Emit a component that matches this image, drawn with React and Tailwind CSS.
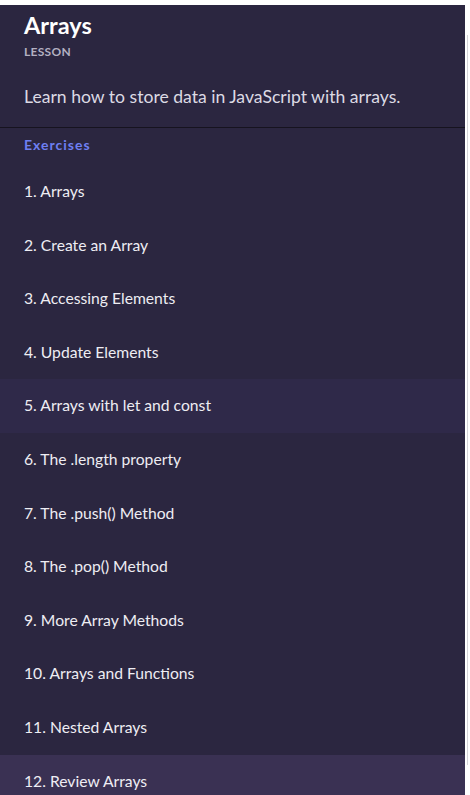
const exercises = [
  "1. Arrays",
  "2. Create an Array",
  "3. Accessing Elements",
  "4. Update Elements",
  "5. Arrays with let and const",
  "6. The .length property",
  "7. The .push() Method",
  "8. The .pop() Method",
  "9. More Array Methods",
  "10. Arrays and Functions",
  "11. Nested Arrays",
  "12. Review Arrays",
];

export default function App() {
  return (
    <div className="h-[795px] overflow-hidden bg-white pt-[5px] font-['Lato',sans-serif]">
      <div className="flex h-full">
        <div className="w-[465px] bg-[#2b2640] text-[#eeedf3]">
          {/* Header */}
          <div className="px-6 pt-[6px] pb-[18px] border-b border-[#16131f]">
            <h1 className="text-[23.5px] font-bold leading-[28px] text-white">Arrays</h1>
            <p className="mt-[5px] text-[12px] font-bold leading-[16px] tracking-[0.3px] text-[#b3b0c2]">LESSON</p>
            <p className="mt-[25px] text-[17.6px] leading-[24px] text-[#dcdae4]">
              Learn how to store data in JavaScript with arrays.
            </p>
          </div>

          {/* Exercises */}
          <div className="px-6 pt-[8px] pb-[11px]">
            <p className="text-[14px] font-bold leading-[18px] tracking-[1px] text-[#6e7ff2]">Exercises</p>
          </div>
          <ul>
            {exercises.map((name, i) => (
              <li
                key={name}
                className={`flex h-[53.6px] items-center px-6 text-[15.7px] ${
                  i === 4 ? "bg-[#2f2949]" : i === 11 ? "bg-[#3a3153]" : ""
                }`}
              >
                {name}
              </li>
            ))}
          </ul>
        </div>
        <div className="flex-1 pl-[2px] pt-[30px]">
          <div className="h-[730px] w-px bg-[#d4d4d8]" />
        </div>
      </div>
    </div>
  );
}
